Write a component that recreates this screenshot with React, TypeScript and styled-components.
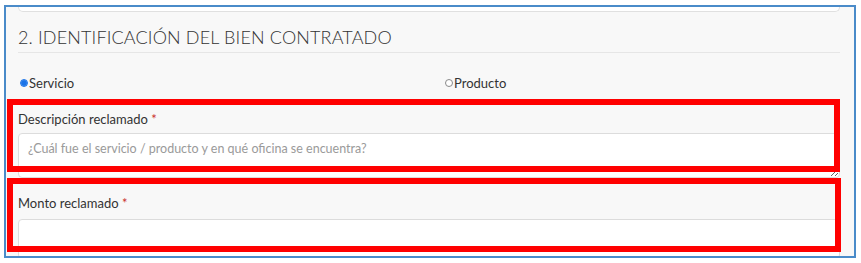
import React from "react";
import styled, { createGlobalStyle } from "styled-components";

const GlobalStyle = createGlobalStyle`
  html, body {
    margin: 0;
    padding: 0;
    background: #ffffff;
  }
  body {
    font-family: Lato, "Noto Sans", "Liberation Sans", sans-serif;
  }
`;

const Frame = styled.div`
  position: relative;
  box-sizing: border-box;
  height: 253px;
  margin: 5px 5px 5px 4px;
  padding: 0 14px 0 12px;
  border: 2px solid #4a8bc9;
  background: #f8f8f8;
  overflow: hidden;
`;

const PrevTail = styled.div`
  height: 4px;
  background: #ffffff;
  border: 1px solid #e0e0e0;
  border-top: none;
  border-radius: 0 0 5px 5px;
`;

const SectionTitle = styled.h2`
  margin: 13px 0 0;
  padding-bottom: 3px;
  border-bottom: 1px solid #e6e6e6;
  font-size: 18px;
  line-height: 24px;
  font-weight: 300;
  letter-spacing: 0.15px;
  color: #333;
`;

const RadioRow = styled.div`
  display: grid;
  grid-template-columns: 425px 1fr;
  margin-top: 22px;
  font-size: 13px;
  line-height: 16px;
  color: #333;
`;

const RadioLabel = styled.label`
  display: flex;
  align-items: center;
  padding-left: 2px;
`;

const RadioDot = styled.input`
  appearance: none;
  box-sizing: border-box;
  width: 8px;
  height: 8px;
  margin: 0 1px 1px 0;
  border-radius: 50%;
  border: 1px solid ${(p) => (p.checked ? "#1a73e8" : "#8a8a8a")};
  background: ${(p) => (p.checked ? "radial-gradient(circle, #1a73e8 55%, #5b9cf0 70%)" : "#fff")};
`;

const Group = styled.div<{ $top: number }>`
  margin-top: ${(p) => p.$top}px;
`;

const Label = styled.div`
  font-size: 13px;
  line-height: 16px;
  color: #333;
`;

const Required = styled.span`
  color: #c9302c;
`;

const TextArea = styled.textarea`
  display: block;
  box-sizing: border-box;
  width: 100%;
  height: 45px;
  margin-top: 6px;
  padding: 7px 9px;
  border: 1px solid #dcdcdc;
  border-radius: 4px;
  background: #fff;
  font-family: inherit;
  font-size: 12.5px;
  color: #333;
  &::placeholder {
    color: #9a9a9a;
  }
`;

const Input = styled.input`
  display: block;
  box-sizing: border-box;
  width: 100%;
  height: 40px;
  margin-top: 8px;
  border: 1px solid #dcdcdc;
  border-radius: 4px;
  background: #fff;
`;

const Highlight = styled.div<{ $top: number; $width: number; $height: number }>`
  position: absolute;
  left: 1px;
  top: ${(p) => p.$top}px;
  width: ${(p) => p.$width}px;
  height: ${(p) => p.$height}px;
  box-sizing: border-box;
  border: 6px solid #ff0000;
  pointer-events: none;
`;

export default function App() {
  return (
    <>
      <GlobalStyle />
      <Frame>
        <PrevTail />
        <SectionTitle>2. IDENTIFICACIÓN DEL BIEN CONTRATADO</SectionTitle>
        <RadioRow>
          <RadioLabel>
            <RadioDot type="radio" name="tipo" checked readOnly />
            Servicio
          </RadioLabel>
          <RadioLabel>
            <RadioDot type="radio" name="tipo" checked={false} readOnly />
            Producto
          </RadioLabel>
        </RadioRow>
        <Group $top={20}>
          <Label>
            Descripción reclamado <Required>*</Required>
          </Label>
          <TextArea placeholder="¿Cuál fue el servicio / producto y en qué oficina se encuentra?" />
        </Group>
        <Group $top={17}>
          <Label>
            Monto reclamado <Required>*</Required>
          </Label>
          <Input />
        </Group>
        <Highlight $top={92} $width={833} $height={73} />
        <Highlight $top={171} $width={834} $height={74} />
      </Frame>
    </>
  );
}
